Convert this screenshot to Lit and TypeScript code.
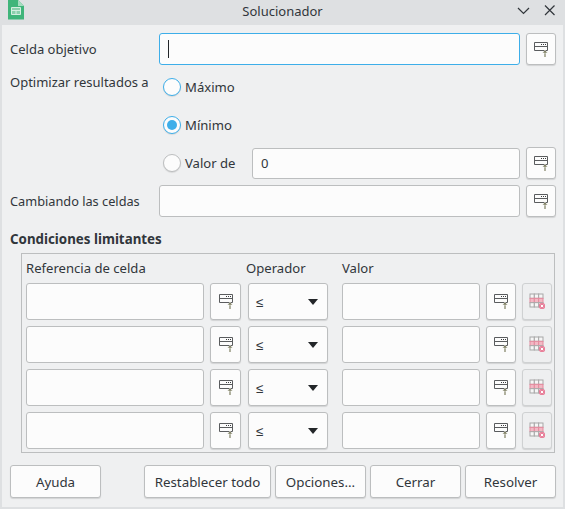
import { LitElement, html, css, svg } from 'lit';
import { customElement } from 'lit/decorators.js';

const pickerIcon = html`
  <svg class="icon" width="16" height="16" viewBox="0 0 16 16" aria-hidden="true">
    <path d="M1.5 1.5h13v8h-13z" fill="#fcfcfc" stroke="#5a5c5e" stroke-width="1" />
    <path d="M1.5 5.5h13" stroke="#5a5c5e" stroke-width="1" />
    <path d="M8 3.5h1M10 3.5h1M12 3.5h1" stroke="#3a3c3e" stroke-width="1" fill="none" />
    <path d="M12 10v6" stroke="#7d7e60" stroke-width="1.2" />
    <path d="M9.5 12l2.5-3 2.5 3z" fill="#6f7050" stroke="#fcfcfc" stroke-width="0.5" />
  </svg>
`;

const deleteCells = [0, 1, 2].flatMap((r) =>
  [0, 1, 2].map((c) => svg`<rect x=${1 + c * 4.33} y=${1 + r * 4.33} width="4.33" height="4.33" fill=${r === 1 ? '#f2b9c4' : '#f6f6f6'} stroke=${r === 1 ? '#e58a9e' : '#a8a8a8'} stroke-width="1" />`),
);

const deleteIcon = html`
  <svg class="icon" width="16" height="16" viewBox="0 0 16 16" aria-hidden="true">
    ${deleteCells}
    <circle cx="13" cy="13" r="3.2" fill="#e8809a" />
    <path d="M11.8 11.8l2.4 2.4M14.2 11.8l-2.4 2.4" stroke="#fff" stroke-width="1" />
  </svg>
`;

@customElement('app-root')
export class AppRoot extends LitElement {
  static styles = css`
    :host {
      display: block;
      width: 565px;
      height: 509px;
      background: #dee0e2;
      color: #31363b;
      font-family: 'Noto Sans', sans-serif;
      font-size: 13.33px;
      line-height: 18px;
      overflow: hidden;
    }

    .titlebar {
      position: relative;
      height: 25px;
      background: #dee0e2;
      display: flex;
      align-items: center;
      justify-content: center;
      padding-bottom: 4px;
      box-sizing: border-box;
      font-size: 13px;
    }

    .logo {
      position: absolute;
      left: 8px;
      top: 0;
    }

    .winbtns {
      position: absolute;
      right: 9px;
      top: 4px;
      display: flex;
      gap: 13px;
    }

    .content {
      box-sizing: border-box;
      height: 482px;
      margin: 0 2px;
      background: #eff0f1;
      padding: 8px 7px 0 8px;
    }

    .row {
      display: flex;
      gap: 6px;
    }

    .row-label {
      width: 143px;
      align-self: center;
      font-size: 13px;
    }

    .row-label.tight {
      font-size: 12.75px;
    }

    .field {
      display: block;
      box-sizing: border-box;
      background: #fcfcfc;
      border: 1px solid #bcbebf;
      border-radius: 3px;
    }

    .grow {
      flex: 1;
      height: 32px;
    }

    .focused {
      position: relative;
      border-color: #3daee9;
    }

    .caret {
      position: absolute;
      left: 8px;
      top: 6px;
      width: 1px;
      height: 18px;
      background: #232629;
    }

    .btn {
      box-sizing: border-box;
      background: #fcfcfc;
      border: 1px solid #bcbebf;
      border-radius: 3px;
      box-shadow: 0 1px 1px rgba(0, 0, 0, 0.12);
      display: flex;
      align-items: center;
      justify-content: center;
      color: #31363b;
    }

    .pick {
      width: 30px;
      height: 32px;
      flex: none;
    }

    .icon {
      margin-top: -1px;
    }

    .disabled {
      background: #eeeff0;
      border-color: #cfd1d2;
    }

    .optimize {
      display: grid;
      grid-template-columns: 153px 1fr;
      margin-top: 6px;
    }

    .optimize-label {
      margin-top: 2px;
      font-size: 13px;
    }

    .radios {
      display: flex;
      flex-direction: column;
    }

    .radio {
      display: flex;
      align-items: center;
      gap: 4px;
      height: 32px;
      font-size: 13.1px;
    }

    .radio + .radio {
      margin-top: 6px;
    }

    .circle {
      box-sizing: border-box;
      width: 18px;
      height: 18px;
      flex: none;
      border-radius: 50%;
      background: #fcfcfc;
      border: 1px solid #3daee9;
      display: flex;
      align-items: center;
      justify-content: center;
      box-shadow: 0 1px 1px rgba(0, 0, 0, 0.1);
    }

    .circle.off {
      border-color: #bcbebf;
    }

    .circle i {
      width: 10px;
      height: 10px;
      border-radius: 50%;
      background: #3daee9;
    }

    .value-label {
      width: 63px;
      flex: none;
    }

    .value-input {
      display: flex;
      align-items: center;
      padding-left: 8px;
      margin-right: 2px;
      height: 31px;
    }

    .changing {
      margin-top: 6px;
    }

    .section {
      font-weight: 700;
      margin-top: 13px;
      height: 18px;
    }

    .frame {
      box-sizing: border-box;
      margin: 5px 1px 0 11px;
      height: 200px;
      border: 1px solid #bcbebf;
      padding: 5px 2px 0 4px;
    }

    .grid {
      display: grid;
      grid-template-columns: 178px 31px 81px 146px 30px 30px;
      grid-template-rows: 18px repeat(4, 37px);
      gap: 6px;
    }

    .head {
      font-size: 13.1px;
    }

    .head-op {
      margin-left: -1px;
    }

    .head-value,
    .value-field {
      margin-left: 8px;
    }

    .select {
      margin-left: 1px;
      justify-content: space-between;
      padding: 0 9px 0 7px;
    }

    .arrow {
      width: 0;
      height: 0;
      border-left: 5.5px solid transparent;
      border-right: 5.5px solid transparent;
      border-top: 6px solid #232629;
    }

    .footer {
      display: flex;
      margin-top: 12px;
      gap: 4px;
    }

    .footer .btn {
      width: 91px;
      height: 33px;
    }

    .footer .help {
      margin-right: 39px;
    }

    .footer .wide {
      width: 127px;
    }
  `;

  private renderRow() {
    return html`
      <div class="field"></div>
      <div class="btn">${pickerIcon}</div>
      <div class="btn select"><span>≤</span><span class="arrow"></span></div>
      <div class="field value-field"></div>
      <div class="btn">${pickerIcon}</div>
      <div class="btn disabled">${deleteIcon}</div>
    `;
  }

  render() {
    return html`
      <div class="titlebar">
        <svg class="logo" width="16" height="20" viewBox="0 0 16 20" aria-hidden="true">
          <path d="M0 0h10l6 6v13.5H0z" fill="#3fb57a" />
          <path d="M10 0l6 6h-6z" fill="#a5dcc0" />
          <path d="M3.5 7.5h9v7h-9z M3.5 10.5h9 M8 10.5v4" fill="#8ad0ac" stroke="#d5efe1" stroke-width="1" />
        </svg>
        <span>Solucionador</span>
        <div class="winbtns">
          <svg width="13" height="13" viewBox="0 0 13 13" aria-hidden="true"><path d="M1 4l5.5 5.5L12 4" fill="none" stroke="#31363b" stroke-width="1.2" /></svg>
          <svg width="13" height="13" viewBox="0 0 13 13" aria-hidden="true"><path d="M2 1.5l9.5 9.5M11.5 1.5L2 11" fill="none" stroke="#31363b" stroke-width="1.2" /></svg>
        </div>
      </div>
      <div class="content">
        <div class="row">
          <div class="row-label">Celda objetivo</div>
          <div class="field grow focused"><span class="caret"></span></div>
          <div class="btn pick">${pickerIcon}</div>
        </div>
        <div class="optimize">
          <div class="optimize-label">Optimizar resultados a</div>
          <div class="radios">
            <div class="radio"><span class="circle"></span>Máximo</div>
            <div class="radio"><span class="circle"><i></i></span>Mínimo</div>
            <div class="radio">
              <span class="circle off"></span>
              <span class="value-label">Valor de</span>
              <div class="field grow value-input">0</div>
              <div class="btn pick">${pickerIcon}</div>
            </div>
          </div>
        </div>
        <div class="row changing">
          <div class="row-label tight">Cambiando las celdas</div>
          <div class="field grow"></div>
          <div class="btn pick">${pickerIcon}</div>
        </div>
        <div class="section">Condiciones limitantes</div>
        <div class="frame">
          <div class="grid">
            <div class="head">Referencia de celda</div>
            <div></div>
            <div class="head head-op">Operador</div>
            <div class="head head-value">Valor</div>
            <div></div>
            <div></div>
            ${[0, 1, 2, 3].map(() => this.renderRow())}
          </div>
        </div>
        <div class="footer">
          <div class="btn help">Ayuda</div>
          <div class="btn wide">Restablecer todo</div>
          <div class="btn">Opciones...</div>
          <div class="btn">Cerrar</div>
          <div class="btn">Resolver</div>
        </div>
      </div>
    `;
  }
}
